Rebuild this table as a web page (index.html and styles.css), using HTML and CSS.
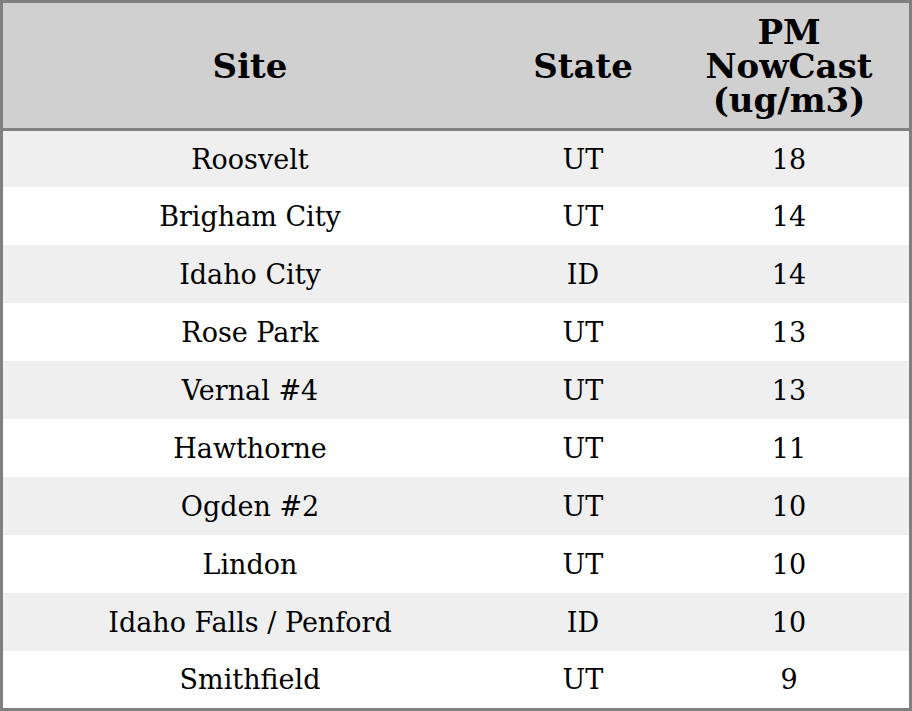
FILE: index.html
```html
<!DOCTYPE html>
<html>
<head>
<meta charset="utf-8">
<link rel="stylesheet" href="styles.css">
</head>
<body>
<table class="aq">
  <colgroup>
    <col class="c-site">
    <col class="c-state">
    <col class="c-pm">
  </colgroup>
  <thead>
    <tr><th>Site</th><th>State</th><th>PM NowCast (ug/m3)</th></tr>
  </thead>
  <tbody>
    <tr><td>Roosvelt</td><td>UT</td><td>18</td></tr>
    <tr><td>Brigham City</td><td>UT</td><td>14</td></tr>
    <tr><td>Idaho City</td><td>ID</td><td>14</td></tr>
    <tr><td>Rose Park</td><td>UT</td><td>13</td></tr>
    <tr><td>Vernal #4</td><td>UT</td><td>13</td></tr>
    <tr><td>Hawthorne</td><td>UT</td><td>11</td></tr>
    <tr><td>Ogden #2</td><td>UT</td><td>10</td></tr>
    <tr><td>Lindon</td><td>UT</td><td>10</td></tr>
    <tr><td>Idaho Falls / Penford</td><td>ID</td><td>10</td></tr>
    <tr><td>Smithfield</td><td>UT</td><td>9</td></tr>
  </tbody>
</table>
</body>
</html>
```

FILE: styles.css
```css
html, body {
  margin: 0;
  padding: 0;
  background: #ffffff;
}
.aq {
  width: 912px;
  border: 3px solid #808080;
  border-collapse: separate;
  border-spacing: 0;
  table-layout: fixed;
  font-family: "DejaVu Serif", serif;
  color: #000;
}
.c-site { width: 494px; }
.c-state { width: 172px; }
.c-pm { width: 240px; }
.aq th {
  background: #d0d0d0;
  font-size: 34px;
  font-weight: bold;
  line-height: 34px;
  height: 128px;
  padding: 0 4px;
  box-sizing: border-box;
  border-bottom: 3px solid #808080;
  text-align: center;
  vertical-align: middle;
}
.aq td {
  font-size: 27px;
  height: 58px;
  padding: 0;
  text-align: center;
  vertical-align: middle;
  background: #ffffff;
}
.aq tbody tr:nth-child(odd) td { background: #efefef; }
.aq tbody tr:first-child td { height: 56px; }
.aq tbody tr:last-child td { height: 57px; }
```
